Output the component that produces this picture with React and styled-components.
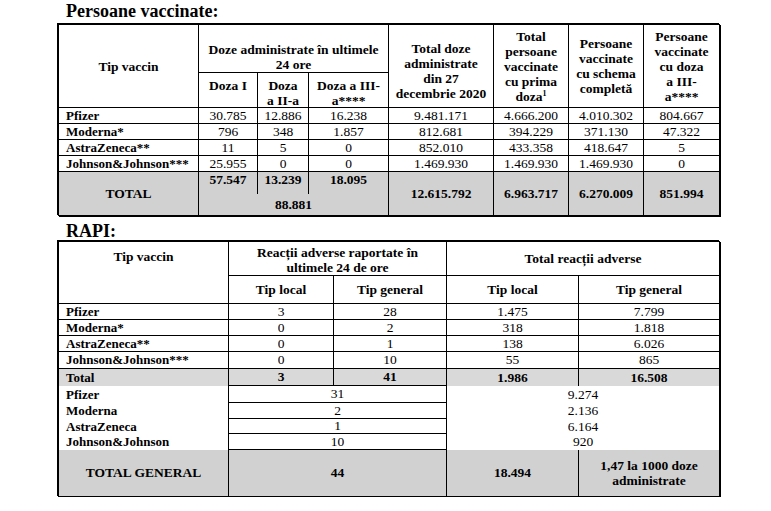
import React from 'react';
import styled, { createGlobalStyle } from 'styled-components';

const Global = createGlobalStyle`
  html, body { margin: 0; padding: 0; background: #fff; }
  body { font-family: "Liberation Serif", "Times New Roman", serif; color: #000; }
`;

const Page = styled.div`
  width: 771px;
  box-sizing: border-box;
  padding: 1px 0 0 58px;
`;

const SectionTitle = styled.h2`
  margin: ${(p) => p.$mt || 0}px 0 ${(p) => p.$mb || 0}px 8px;
  font-family: "Liberation Serif", "Times New Roman", serif;
  font-size: 18px;
  line-height: 20px;
  font-weight: bold;
`;

const Table = styled.div`
  display: grid;
  width: max-content;
  grid-template-columns: ${(p) => p.$cols};
  grid-template-rows: ${(p) => p.$rows};
  border-top: 1px solid #000;
  border-left: 1px solid #000;
  box-shadow: 1px 1px 0 #000, -1px -1px 0 #000;
  font-size: 13.5px;
`;

const Cell = styled.div`
  box-sizing: border-box;
  grid-column: span ${(p) => p.$span || 1};
  grid-row: span ${(p) => p.$rspan || 1};
  display: flex;
  flex-direction: column;
  justify-content: ${(p) => (p.$v === 'top' ? 'flex-start' : p.$v === 'bottom' ? 'flex-end' : 'center')};
  align-items: ${(p) => (p.$left ? 'flex-start' : 'center')};
  text-align: ${(p) => (p.$left ? 'left' : 'center')};
  padding: ${(p) => p.$pad || '0'};
  border-right: ${(p) => (p.$nr ? 'none' : '1px solid #000')};
  border-bottom: ${(p) => (p.$nb ? 'none' : '1px solid #000')};
  background: ${(p) => p.$bg || 'transparent'};
  font-weight: ${(p) => (p.$bold ? 'bold' : 'normal')};
  line-height: 16px;
  white-space: nowrap;
`;

const Head = styled(Cell).attrs({ $bold: true })`
  font-size: 13.5px;
  line-height: ${(p) => p.$lh || 15}px;
`;

const Name = styled(Cell).attrs({ $bold: true, $left: true })`
  padding-left: 7px;
  font-size: 13px;
`;

const Sup = styled.sup`
  font-size: 8px;
  line-height: 0;
  vertical-align: 5px;
`;

const SplitTotal = styled.div`
  grid-column: span 3;
  display: grid;
  grid-template-columns: 59px 51px 79px;
  grid-template-rows: 22px 1fr;
  background: ${(p) => p.$bg};
  border-right: 1px solid #000;
  border-bottom: 1px solid #000;
  font-weight: bold;
  line-height: 16px;
`;

const SplitValue = styled.div`
  display: flex;
  justify-content: center;
  align-items: flex-start;
  border-right: ${(p) => (p.$last ? 'none' : '1px solid #000')};
`;

const SplitSum = styled.div`
  grid-column: 1 / -1;
  display: flex;
  align-items: center;
  justify-content: center;
`;

const GRAY = '#d1d1d1';
const GRAY_LIGHT = '#d9d9d9';

const vaccRows = [
  ['Pfizer', '30.785', '12.886', '16.238', '9.481.171', '4.666.200', '4.010.302', '804.667'],
  ['Moderna*', '796', '348', '1.857', '812.681', '394.229', '371.130', '47.322'],
  ['AstraZeneca**', '11', '5', '0', '852.010', '433.358', '418.647', '5'],
  ['Johnson&Johnson***', '25.955', '0', '0', '1.469.930', '1.469.930', '1.469.930', '0'],
];

const rapiRows = [
  ['Pfizer', '3', '28', '1.475', '7.799'],
  ['Moderna*', '0', '2', '318', '1.818'],
  ['AstraZeneca**', '0', '1', '138', '6.026'],
  ['Johnson&Johnson***', '0', '10', '55', '865'],
];

const rapiTotals = [
  ['Pfizer', '31', '9.274'],
  ['Moderna', '2', '2.136'],
  ['AstraZeneca', '1', '6.164'],
  ['Johnson&Johnson', '10', '920'],
];

function VaccinatedTable() {
  return (
    <Table
      $cols="140px 59px 51px 80px 105px 75px 75px 76px"
      $rows="48px 35px 16px 16px 16px 16px 44px"
    >
      <Head $rspan={2}>Tip vaccin</Head>
      <Head $span={3} $v="bottom">
        <span>Doze administrate în ultimele</span>
        <span>24 ore</span>
      </Head>
      <Head $rspan={2} $pad="9px 0 0">
        <span>Total doze</span>
        <span>administrate</span>
        <span>din 27</span>
        <span>decembrie 2020</span>
      </Head>
      <Head $rspan={2}>
        <span>Total</span>
        <span>persoane</span>
        <span>vaccinate</span>
        <span>cu prima</span>
        <span>
          doza<Sup>1</Sup>
        </span>
      </Head>
      <Head $rspan={2}>
        <span>Persoane</span>
        <span>vaccinate</span>
        <span>cu schema</span>
        <span>completă</span>
      </Head>
      <Head $rspan={2}>
        <span>Persoane</span>
        <span>vaccinate</span>
        <span>cu doza</span>
        <span>a III-</span>
        <span>a****</span>
      </Head>
      <Head $v="top" $pad="5px 0 0">Doza I</Head>
      <Head $v="top" $pad="5px 0 0">
        <span>Doza</span>
        <span>a II-a</span>
      </Head>
      <Head $v="top" $pad="5px 0 0">
        <span>Doza a III-</span>
        <span>a****</span>
      </Head>

      {vaccRows.map((r) => (
        <React.Fragment key={r[0]}>
          <Name>{r[0]}</Name>
          {r.slice(1).map((v, i) => (
            <Cell key={i}>{v}</Cell>
          ))}
        </React.Fragment>
      ))}

      <Cell $bold $bg={GRAY}>TOTAL</Cell>
      <SplitTotal $bg={GRAY}>
        <SplitValue>57.547</SplitValue>
        <SplitValue>13.239</SplitValue>
        <SplitValue $last>18.095</SplitValue>
        <SplitSum>88.881</SplitSum>
      </SplitTotal>
      <Cell $bold $bg={GRAY}>12.615.792</Cell>
      <Cell $bold $bg={GRAY}>6.963.717</Cell>
      <Cell $bold $bg={GRAY}>6.270.009</Cell>
      <Cell $bold $bg={GRAY}>851.994</Cell>
    </Table>
  );
}

function RapiTable() {
  return (
    <Table
      $cols="170px 105px 113px 132px 141px"
      $rows="34px 28px 16px 16px 16px 17px 17px 17px 16px 15px 16px 47px"
    >
      <Head $rspan={2} $v="top" $pad="7px 0 0">Tip vaccin</Head>
      <Head $span={2} $pad="2px 0 0">
        <span>Reacții adverse raportate în</span>
        <span>ultimele 24 de ore</span>
      </Head>
      <Head $span={2}>Total reacții adverse</Head>
      <Head>Tip local</Head>
      <Head>Tip general</Head>
      <Head>Tip local</Head>
      <Head>Tip general</Head>

      {rapiRows.map((r) => (
        <React.Fragment key={r[0]}>
          <Name>{r[0]}</Name>
          {r.slice(1).map((v, i) => (
            <Cell key={i}>{v}</Cell>
          ))}
        </React.Fragment>
      ))}

      <Name $nb $bg={GRAY_LIGHT}>Total</Name>
      <Cell $bold $bg={GRAY_LIGHT}>3</Cell>
      <Cell $bold $bg={GRAY_LIGHT}>41</Cell>
      <Cell $bold $nb $bg={GRAY_LIGHT}>1.986</Cell>
      <Cell $bold $nb $bg={GRAY_LIGHT}>16.508</Cell>

      {rapiTotals.map((r) => (
        <React.Fragment key={r[0]}>
          <Name $nb>{r[0]}</Name>
          <Cell $span={2}>{r[1]}</Cell>
          <Cell $span={2} $nb>{r[2]}</Cell>
        </React.Fragment>
      ))}

      <Cell $bold $bg={GRAY}>TOTAL GENERAL</Cell>
      <Cell $bold $span={2} $bg={GRAY}>44</Cell>
      <Cell $bold $bg={GRAY}>18.494</Cell>
      <Head $bg={GRAY}>
        <span>1,47 la 1000 doze</span>
        <span>administrate</span>
      </Head>
    </Table>
  );
}

export default function App() {
  return (
    <>
      <Global />
      <Page>
        <SectionTitle $mb={3}>Persoane vaccinate:</SectionTitle>
        <VaccinatedTable />
        <SectionTitle $mt={5}>RAPI:</SectionTitle>
        <RapiTable />
      </Page>
    </>
  );
}
